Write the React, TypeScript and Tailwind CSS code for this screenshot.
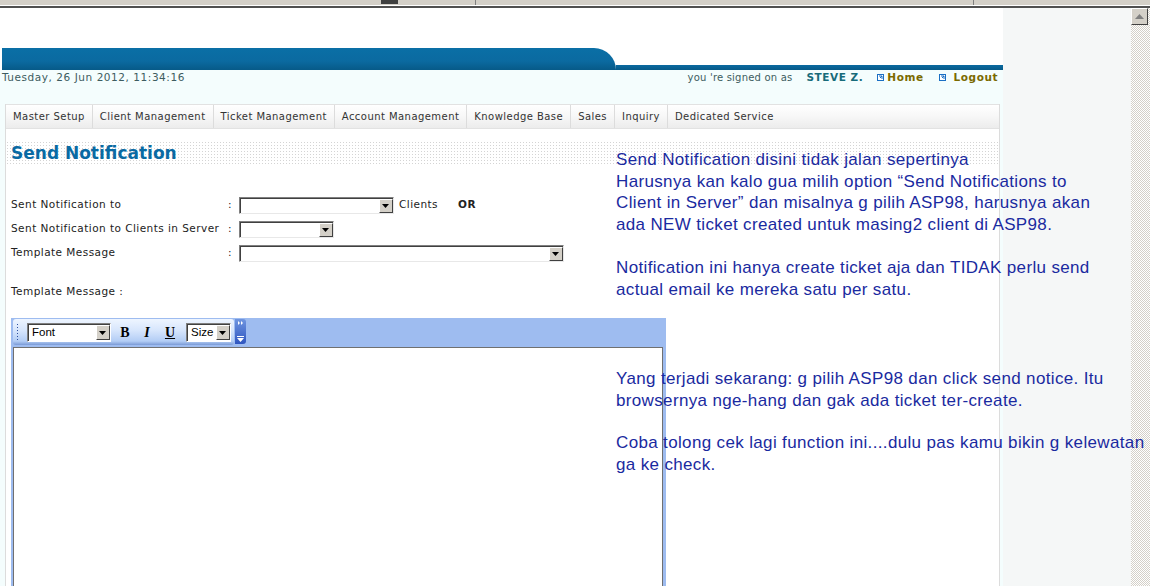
import React from "react";

const Combo = ({ w }: { w: number }) => (
  <div
    className="flex h-[17px] bg-white border-t border-l border-t-[#808080] border-l-[#808080] border-b border-r border-b-[#e8e8e8] border-r-[#e8e8e8]"
    style={{ width: w }}
  >
    <div className="flex-1 border-t border-l border-[#404040] border-r-0 border-b-0" />
    <div className="w-[15px] h-full border-t border-[#404040] flex items-center justify-center">
      <div className="w-[14px] h-[14px] bg-[#d4d0c8] border border-t-white border-l-white border-r-[#404040] border-b-[#404040] flex items-center justify-center">
        <svg width="7" height="4" viewBox="0 0 7 4"><path d="M0 0h7L3.5 4z" fill="#000" /></svg>
      </div>
    </div>
  </div>
);

const NavItem = ({ label, last }: { label: string; last?: boolean }) => (
  <div className={`px-[7px] h-full flex items-center ${last ? "" : "border-r border-[#dcdcdc]"}`}>
    <span>{label}</span>
  </div>
);

const LinkIcon = () => (
  <svg width="7" height="7" viewBox="0 0 7 7" className="mr-[3px]">
    <rect x="0.5" y="0.5" width="6" height="6" fill="#fff" stroke="#1a6fc4" />
    <path d="M2 2h3v3M5 2L3 4" stroke="#1a6fc4" strokeWidth="1" fill="none" />
  </svg>
);

const SmallCombo = ({ label, w }: { label: string; w: number }) => (
  <div className="flex h-[19px] bg-white border border-t-[#808080] border-l-[#808080] border-b-white border-r-white" style={{ width: w }}>
    <div className="flex-1 flex items-center pl-[3px] text-[11.5px] text-black border-t border-l border-[#404040] border-b-0 border-r-0 font-['Liberation_Sans',sans-serif]">
      {label}
    </div>
    <div className="w-[15px] border-t border-[#404040] flex items-center justify-center">
      <div className="w-[14px] h-[15px] bg-[#d4d0c8] border border-t-white border-l-white border-r-[#404040] border-b-[#404040] flex items-center justify-center">
        <svg width="7" height="4" viewBox="0 0 7 4"><path d="M0 0h7L3.5 4z" fill="#000" /></svg>
      </div>
    </div>
  </div>
);

export default function App() {
  return (
    <div className="w-[1150px] h-[586px] overflow-hidden relative bg-white flex flex-col font-['DejaVu_Sans',sans-serif]">
      {/* browser chrome strip */}
      <div className="h-[6px] bg-[#d4d0c8] relative border-b border-white shrink-0">
        <div className="absolute left-[381px] top-0 w-[17px] h-[4px] bg-[#404040]" />
        <div className="absolute left-[475px] top-0 w-px h-[5px] bg-[#808080]" />
        <div className="absolute left-[973px] top-0 w-px h-[5px] bg-[#808080]" />
      </div>
      <div className="h-[2px] bg-[#505050] shrink-0" />

      <div className="flex flex-1 min-h-0">
        {/* page */}
        <div className="w-[1003px] flex flex-col bg-[#f4fdfd]">
          <div className="h-[40px] bg-white shrink-0" />
          {/* banner */}
          <div className="flex h-[22px] bg-white shrink-0 pl-[2px]">
            <div className="w-[614px] h-full rounded-tr-[22px] bg-[linear-gradient(180deg,#0a6fa6_0%,#0b6aa0_60%,#075a88_100%)]" />
            <div className="flex-1 self-end h-[5px] bg-[linear-gradient(180deg,#0a6aa0,#075a88)]" />
          </div>
          {/* info bar */}
          <div className="h-[15px] flex items-center justify-between pl-[2px] pr-[5px] text-[10.5px] tracking-[0.55px] text-[#3d5c60] shrink-0">
            <span>Tuesday, 26 Jun 2012, 11:34:16</span>
            <div className="flex items-center">
              <span className="text-[10px] tracking-[0.2px]">you 're signed on as</span>
              <span className="ml-[14px] font-bold text-[#176b7a]">STEVE Z.</span>
              <span className="ml-[14px] flex items-center font-bold text-[#7a6a00]">
                <LinkIcon />Home
              </span>
              <span className="ml-[15px] flex items-center font-bold text-[#7a6a00]">
                <LinkIcon /><span className="ml-[5px]">Logout</span>
              </span>
            </div>
          </div>
          <div className="h-[19px] shrink-0" />
          {/* content frame */}
          <div className="flex-1 ml-[5px] mr-[3px] flex flex-col bg-white border-l border-r border-[#dcdcdc] min-h-0">
            {/* nav */}
            <div className="h-[25px] flex items-center border-t border-b border-[#e2e2e2] bg-[linear-gradient(180deg,#ffffff_0%,#f7f7f7_50%,#ececec_100%)] text-[10px] text-[#333] tracking-[0.45px] shrink-0">
              <NavItem label="Master Setup" />
              <NavItem label="Client Management" />
              <NavItem label="Ticket Management" />
              <NavItem label="Account Management" />
              <NavItem label="Knowledge Base" />
              <NavItem label="Sales" />
              <NavItem label="Inquiry" />
              <NavItem label="Dedicated Service" last />
            </div>
            <div className="h-[12px] shrink-0" />
            {/* title */}
            <div className="h-[25px] flex items-center pl-[5px] shrink-0 [background-image:radial-gradient(#d4d4d4_0.8px,transparent_0.9px)] [background-size:3px_3px]">
              <span className="text-[17px] font-bold text-[#0a6aa3]">Send Notification</span>
            </div>
            {/* form */}
            <div className="pl-[5px] pt-[27px] font-['DejaVu_Sans',sans-serif] text-[10.5px] tracking-[0.45px] text-[#222]">
              <div className="flex items-center h-[24px]">
                <span className="w-[217px]">Sent Notification to</span>
                <span className="w-[11px]">:</span>
                <Combo w={155} />
                <span className="ml-[5px]">Clients</span>
                <span className="ml-[20px] font-bold">OR</span>
              </div>
              <div className="flex items-center h-[24px]">
                <span className="w-[217px] whitespace-nowrap">Sent Notification to Clients in Server</span>
                <span className="w-[11px]">:</span>
                <Combo w={95} />
              </div>
              <div className="flex items-center h-[24px]">
                <span className="w-[217px]">Template Message</span>
                <span className="w-[11px]">:</span>
                <Combo w={325} />
              </div>
              <div className="h-[15px]" />
              <div className="h-[24px] flex items-center">Template Message :</div>
            </div>
            {/* editor */}
            <div className="ml-[5px] mt-[14px] w-[655px] flex-1 flex flex-col bg-[#9ebcf0] min-h-0">
              <div className="h-[29px] flex items-start pt-[1px] pl-[2px] shrink-0">
                <div className="h-[26px] flex items-center rounded-[3px] bg-[linear-gradient(180deg,#eef5ff_0%,#d6e5fc_45%,#b3cdf5_85%,#7a9ad6_100%)]">
                  <div className="w-[3px] h-[18px] ml-[3px] [background-image:radial-gradient(#2e4f9e_0.9px,transparent_1px)] [background-size:3px_3px]" />
                  <div className="ml-[8px]"><SmallCombo label="Font" w={84} /></div>
                  <span className="w-[22px] ml-[3px] text-center font-['Liberation_Serif',serif] font-bold text-[14px] text-black">B</span>
                  <span className="w-[22px] text-center font-['Liberation_Serif',serif] font-bold italic text-[14px] text-black">I</span>
                  <span className="w-[24px] text-center font-['Liberation_Serif',serif] font-bold underline text-[14px] text-black">U</span>
                  <div className="ml-[4px] mr-[3px]"><SmallCombo label="Size" w={45} /></div>
                </div>
                <div className="w-[11px] h-[25px] ml-[1px] rounded-r-[3px] bg-[linear-gradient(180deg,#6f95e0,#2f56c0)] flex flex-col items-center justify-between py-[2px]">
                  <svg width="6" height="4" viewBox="0 0 6 4"><path d="M0 0l2 2-2 2zM3 0l2 2-2 2z" fill="#fff" /></svg>
                  <svg width="7" height="6" viewBox="0 0 7 6"><path d="M0 0h7v1H0zM0 2h7L3.5 6z" fill="#fff" /></svg>
                </div>
              </div>
              <div className="flex-1 ml-[2px] mr-[3px] bg-white border-t border-l border-r border-[#707070]" />
            </div>
          </div>
        </div>
        {/* right gray */}
        <div className="flex-1 bg-[#f5f7f7]" />
        {/* scrollbar */}
        <div className="w-[19px] flex flex-col [background-image:repeating-conic-gradient(#d4d0c8_0_25%,#ffffff_0_50%)] [background-size:2px_2px]">
          <div className="w-[17px] h-[17px] bg-[#d4d0c8] border border-t-white border-l-white border-r-[#404040] border-b-[#404040] flex items-center justify-center">
            <svg width="9" height="5" viewBox="0 0 9 5"><path d="M4.5 0L9 5H0z" fill="#808080" /></svg>
          </div>
        </div>
      </div>

      {/* pasted annotation overlay */}
      <div className="absolute left-[616px] top-[149px] font-['Liberation_Sans',sans-serif] text-[17px] tracking-[0.35px] leading-[21.5px] text-[#1a2aa0] whitespace-nowrap">
        <p>Send Notification disini tidak jalan sepertinya</p>
        <p>Harusnya kan kalo gua milih option “Send Notifications to</p>
        <p>Client in Server” dan misalnya g pilih ASP98, harusnya akan</p>
        <p>ada NEW ticket created untuk masing2 client di ASP98.</p>
        <p className="mt-[22px]">Notification ini hanya create ticket aja dan TIDAK perlu send</p>
        <p>actual email ke mereka satu per satu.</p>
        <p className="mt-[68px]">Yang terjadi sekarang: g pilih ASP98 dan click send notice. Itu</p>
        <p>browsernya nge-hang dan gak ada ticket ter-create.</p>
        <p className="mt-[21px]">Coba tolong cek lagi function ini....dulu pas kamu bikin g kelewatan</p>
        <p>ga ke check.</p>
      </div>
    </div>
  );
}
